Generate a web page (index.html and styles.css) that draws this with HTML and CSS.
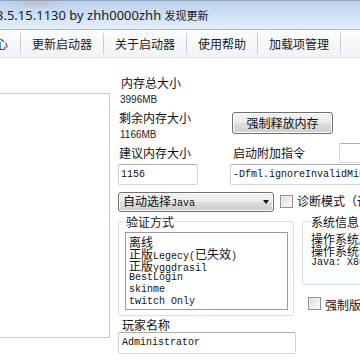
FILE: index.html
```html
<!DOCTYPE html>
<html lang="zh">
<head>
<meta charset="utf-8">
<link rel="stylesheet" href="styles.css">
</head>
<body>
<div class="window">
  <div class="titlebar"><span class="title">3.5.15.1130 by zhh0000zhh <span class="cjk">发现更新</span></span></div>
  <div class="menubar">
    <span class="menu-item first">中心</span><span class="sep"></span>
    <span class="menu-item">更新启动器</span><span class="sep"></span>
    <span class="menu-item">关于启动器</span><span class="sep"></span>
    <span class="menu-item">使用帮助</span><span class="sep"></span>
    <span class="menu-item">加载项管理</span><span class="sep"></span>
  </div>
  <div class="main">
    <div class="left-panel"></div>
    <div class="right">
      <div class="upper">
        <div class="col-mem">
          <div class="label l1">内存总大小</div>
          <div class="value v1">3996MB</div>
          <div class="label l2">剩余内存大小</div>
          <div class="value v2">1166MB</div>
          <div class="label l3">建议内存大小</div>
          <div class="input mem-input">1156</div>
        </div>
        <div class="col-launch">
          <button class="btn">强制释放内存</button>
          <div class="arg-row"><span class="label arg-label">启动附加指令</span><span class="input small-input"></span></div>
          <div class="input args-input">-Dfml.ignoreInvalidMinecraftCertificates=true</div>
        </div>
      </div>
      <div class="java-row">
        <div class="combo"><span class="combo-text">自动选择<span class="mono">Java</span></span><span class="arrow"></span></div>
        <span class="checkbox diag-check"></span><span class="label check-label">诊断模式（调试）</span>
      </div>
      <div class="lower">
        <div class="col-auth">
          <fieldset class="group auth">
            <legend>验证方式</legend>
            <ul class="listbox">
              <li><span class="cjk">离线</span></li>
              <li><span class="cjk">正版</span>Legecy(<span class="cjk">已失效</span>)</li>
              <li><span class="cjk">正版</span>yggdrasil</li>
              <li>BestLogin</li>
              <li>skinme</li>
              <li>twitch Only</li>
            </ul>
          </fieldset>
          <div class="label player-label">玩家名称</div>
          <div class="input player-input">Administrator</div>
        </div>
        <div class="col-sys">
          <fieldset class="group sys">
            <legend>系统信息</legend>
            <div class="sys-line">操作系统版本：6.1</div>
            <div class="sys-line">操作系统位数：64</div>
            <div class="sys-line mono">Java: X86</div>
          </fieldset>
          <div class="check-row"><span class="checkbox"></span><span class="label check-label">强制版本隔离</span></div>
        </div>
      </div>
    </div>
  </div>
</div>
</body>
</html>
```
FILE: styles.css
```css
* { box-sizing: border-box; }
html, body {
  margin: 0;
  padding: 0;
  width: 360px;
  height: 360px;
  overflow: hidden;
  background: #fff;
}
body {
  font-family: "Noto Sans CJK SC", "Noto Sans", sans-serif;
  font-size: 12px;
  color: #111;
}
.window {
  width: 360px;
  height: 360px;
  overflow: hidden;
  background: #fff;
}

/* title bar */
.titlebar {
  height: 30px;
  border-bottom: 1px solid #a9bcd2;
  border-top: 1px solid #8fa3bb;
  background:
    radial-gradient(ellipse 30px 8px at 38px 0, rgba(214, 150, 160, 0.55), rgba(214, 150, 160, 0)),
    linear-gradient(to bottom, #bcd2ec 0%, #c8dbf1 35%, #d8e7f7 70%, #e3eefa 100%);
  white-space: nowrap;
  overflow: hidden;
}
.title {
  display: block;
  margin-left: -4px;
  font-family: "Noto Sans", "Noto Sans CJK SC", sans-serif;
  font-size: 13px;
  line-height: 28px;
  color: #1b1b1b;
}
.title .cjk {
  font-family: "Noto Sans CJK SC", sans-serif;
  font-size: 11px;
}

/* menu bar */
.menubar {
  height: 28px;
  display: flex;
  align-items: center;
  border-bottom: 1px solid #e2e4e8;
  background: linear-gradient(to bottom, #fcfdfe, #f1f3f6);
  white-space: nowrap;
}
.menu-item {
  padding: 0 11px;
  line-height: 14px;
  color: #1a1a1a;
}
.menu-item.first {
  margin-left: -16px;
  padding-left: 0;
  padding-right: 12px;
}
.sep {
  width: 1px;
  height: 21px;
  background: #c9ccd1;
  flex-shrink: 0;
}

/* main */
.main {
  display: flex;
  align-items: flex-start;
  height: 302px;
}
.left-panel {
  flex: 0 0 112px;
  margin-left: -2px;
  margin-top: 35px;
  height: 245px;
  border: 1px solid #cdcdcd;
  background: #fff;
}
.right {
  flex: 0 0 250px;
  margin-left: 8px;
}
.upper {
  display: flex;
  align-items: flex-start;
}
.col-mem {
  flex: 0 0 112px;
}
.col-launch {
  flex: 0 0 140px;
}
.label {
  line-height: 14px;
  white-space: nowrap;
}
.l1 { margin-top: 18px; padding-left: 3px; }
.l2 { margin-top: 5px; padding-left: 1px; }
.l3 { margin-top: 5px; padding-left: 1px; }
.value {
  font-family: "Liberation Sans", sans-serif;
  font-size: 10px;
  line-height: 12px;
  padding-left: 2px;
  color: #222;
}
.v1 { margin-top: 4px; }
.v2 { margin-top: 4px; }

.mono {
  font-family: "Liberation Mono", monospace;
  font-size: 10px;
}
.input {
  display: block;
  height: 21px;
  border: 1px solid #d2d5db;
  border-top-color: #abadb3;
  border-radius: 2px;
  background: #fff;
  font-family: "Liberation Mono", "Noto Sans CJK SC", monospace;
  font-size: 10px;
  line-height: 19px;
  padding: 0 2px;
  white-space: nowrap;
  overflow: hidden;
  color: #111;
}
.mem-input {
  width: 80px;
  margin-top: 4px;
}
.btn {
  display: block;
  margin: 54px 0 0 2px;
  width: 101px;
  height: 22px;
  padding: 0;
  border: 1px solid #707070;
  border-radius: 3px;
  background: linear-gradient(to bottom, #f2f2f2 0%, #ebebeb 50%, #dddddd 51%, #cfcfcf 100%);
  box-shadow: inset 0 0 0 1px #fbfbfb;
  font-family: "Noto Sans CJK SC", sans-serif;
  font-size: 12px;
  line-height: 18px;
  color: #111;
}
.arg-row {
  display: flex;
  align-items: flex-start;
  margin-top: 9px;
  height: 20px;
}
.arg-label {
  margin-left: 3px;
  margin-top: 3px;
}
.small-input {
  flex: 0 0 30px;
  height: 20px;
  margin-left: 34px;
}
.args-input {
  width: 140px;
  margin-top: 1px;
}

/* java row */
.java-row {
  display: flex;
  align-items: flex-start;
  margin-top: 7px;
  height: 20px;
  white-space: nowrap;
}
.combo {
  flex: 0 0 156px;
  height: 20px;
  display: flex;
  align-items: center;
  justify-content: space-between;
  padding: 0 4px;
  border: 1px solid #707070;
  border-radius: 3px;
  background: linear-gradient(to bottom, #f2f2f2 0%, #ebebeb 50%, #dddddd 51%, #cfcfcf 100%);
  box-shadow: inset 0 0 0 1px #fafafa;
  line-height: 14px;
}
.arrow {
  width: 0;
  height: 0;
  border-top: 4px solid #111;
  border-left: 3.5px solid transparent;
  border-right: 3.5px solid transparent;
}
.checkbox {
  flex: 0 0 13px;
  width: 13px;
  height: 13px;
  border: 1px solid #8e8f8f;
  background: linear-gradient(135deg, #d4d7dc 0%, #f0f0f0 60%, #fbfbfb 100%);
  box-shadow: inset 0 0 0 1px #f4f4f4;
}
.diag-check {
  margin-left: 6px;
  margin-top: 3px;
}
.check-label {
  margin-left: 4px;
  margin-top: 2px;
}

/* lower */
.lower {
  display: flex;
  align-items: flex-start;
  margin-top: 2px;
}
.col-auth {
  flex: 0 0 176px;
}
.group {
  margin: 0;
  min-width: 0;
  border: 1px solid #d5dfe5;
  border-radius: 3px;
}
.group legend {
  padding: 0 1px;
  margin: 0;
  font-size: 12px;
  line-height: 15px;
  white-space: nowrap;
}
.auth {
  width: 176px;
  padding: 0 5px 5px 6px;
}
.listbox {
  margin: 3px 0 0 0;
  width: 163px;
  height: 78px;
  border: 1px solid #9c9c9c;
  padding: 3px 0 0 3px;
  list-style: none;
  font-family: "Liberation Mono", monospace;
  font-size: 10px;
  line-height: 12px;
  white-space: nowrap;
  overflow: hidden;
  background: #fff;
}
.listbox li {
  height: 12px;
}
.listbox .cjk {
  font-family: "Noto Sans CJK SC", sans-serif;
  font-size: 12px;
}
.player-label {
  margin-top: 2px;
  padding-left: 4px;
}
.player-input {
  width: 178px;
  height: 22px;
  line-height: 20px;
  padding-left: 3px;
}
.col-sys {
  flex: 0 0 100px;
  margin-left: 6px;
}
.sys {
  width: 90px;
  padding: 0 0 15px 8px;
}
.sys legend {
  margin-left: -1px;
}
.sys-line {
  line-height: 12px;
  white-space: nowrap;
}
.sys-line:first-of-type {
  margin-top: 4px;
}
.check-row {
  display: flex;
  align-items: flex-start;
  margin-top: 11px;
  white-space: nowrap;
}
.check-row .checkbox {
  margin-left: 6px;
  margin-top: 1px;
}
```
